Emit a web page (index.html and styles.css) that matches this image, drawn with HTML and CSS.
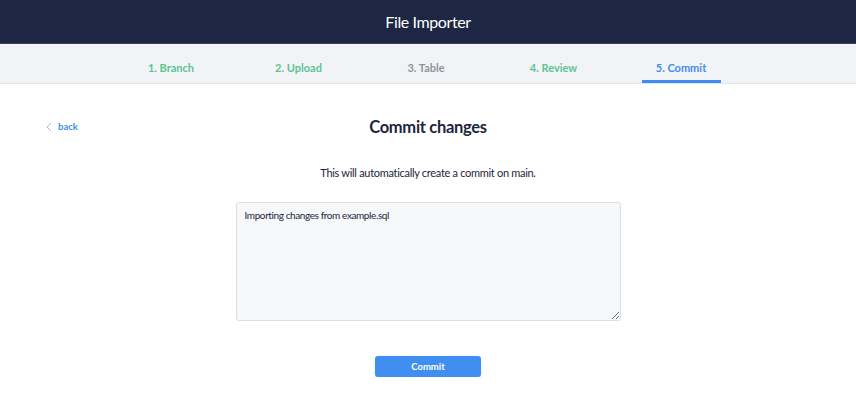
FILE: index.html
```html
<!DOCTYPE html>
<html lang="en">
<head>
    <meta charset="UTF-8">
    <title>File Importer</title>
    <link rel="stylesheet" href="styles.css">
</head>
<body>
<div class="header">File Importer</div>
<div class="tabs">
    <div class="tab done"><span>1. Branch</span></div>
    <div class="tab done"><span>2. Upload</span></div>
    <div class="tab"><span>3. Table</span></div>
    <div class="tab done"><span>4. Review</span></div>
    <div class="tab current"><span>5. Commit</span></div>
</div>
<div class="content">
    <div class="top">
        <a class="back" href="#">
            <svg width="6" height="10" viewBox="0 0 6 10"><path d="M5 1 L1 5 L5 9" fill="none" stroke="#9bbff0" stroke-width="1"/></svg>
            back
        </a>
        <h1>Commit changes</h1>
    </div>
    <p class="desc">This will automatically create a commit on main.</p>
    <textarea class="message">Importing changes from example.sql</textarea>
    <button class="commit">Commit</button>
</div>
</body>
</html>
```

FILE: styles.css
```css
* {
    padding: 0;
    margin: 0;
    box-sizing: border-box;
}
body {
    font-family: "Source Sans Pro", Lato, sans-serif;
    color: #1c2540;
    background: #fff;
}
.header {
    height: 44px;
    background: #1d2642;
    border-bottom: 1px solid #3a4260;
    color: #fff;
    font-size: 16px;
    letter-spacing: -0.4px;
    text-align: center;
    line-height: 43px;
}
.tabs {
    height: 40px;
    background: #f2f3f7;
    border-bottom: 1px solid #e3e5ea;
    display: flex;
    justify-content: center;
    padding-right: 4px;
}
.tab {
    width: 127.5px;
    font-size: 11px;
    font-weight: 700;
    color: #8e939c;
    text-align: center;
}
.tab span {
    display: inline-block;
    padding: 17px 12px 0;
    height: 39px;
    line-height: 14px;
}
.tab.done {
    color: #5ac58e;
}
.tab.current {
    color: #3d8ef0;
}
.tab.current span {
    width: 79px;
    padding: 17px 0 0;
    border-bottom: 3px solid #3d8ef0;
}
.content {
    display: flex;
    flex-direction: column;
    align-items: center;
}
.top {
    position: relative;
    width: 100%;
    text-align: center;
    margin-top: 33px;
}
.back {
    position: absolute;
    left: 46px;
    top: 4px;
    font-size: 9.5px;
    font-weight: 700;
    color: #3d8ef0;
    text-decoration: none;
    display: flex;
    align-items: center;
    gap: 6px;
}
h1 {
    font-size: 16.5px;
    letter-spacing: -0.3px;
    font-weight: 700;
    line-height: 20px;
}
.desc {
    font-size: 11px;
    letter-spacing: -0.3px;
    margin-top: 29px;
    line-height: 14px;
}
.message {
    width: 385px;
    height: 119px;
    margin-top: 22px;
    border: 1px solid #dadde3;
    border-radius: 3px;
    background: #f7f8fa;
    padding: 6px 8px;
    font-family: inherit;
    font-size: 10px;
    letter-spacing: -0.4px;
    color: #1c2540;
}
.commit {
    width: 106px;
    height: 21px;
    margin-top: 35px;
    border: none;
    border-radius: 3px;
    background: #3f8ef0;
    color: #fff;
    font-family: inherit;
    font-size: 9.5px;
    font-weight: 700;
    box-shadow: 0 1px 2px rgba(0,0,0,0.12);
}
```
